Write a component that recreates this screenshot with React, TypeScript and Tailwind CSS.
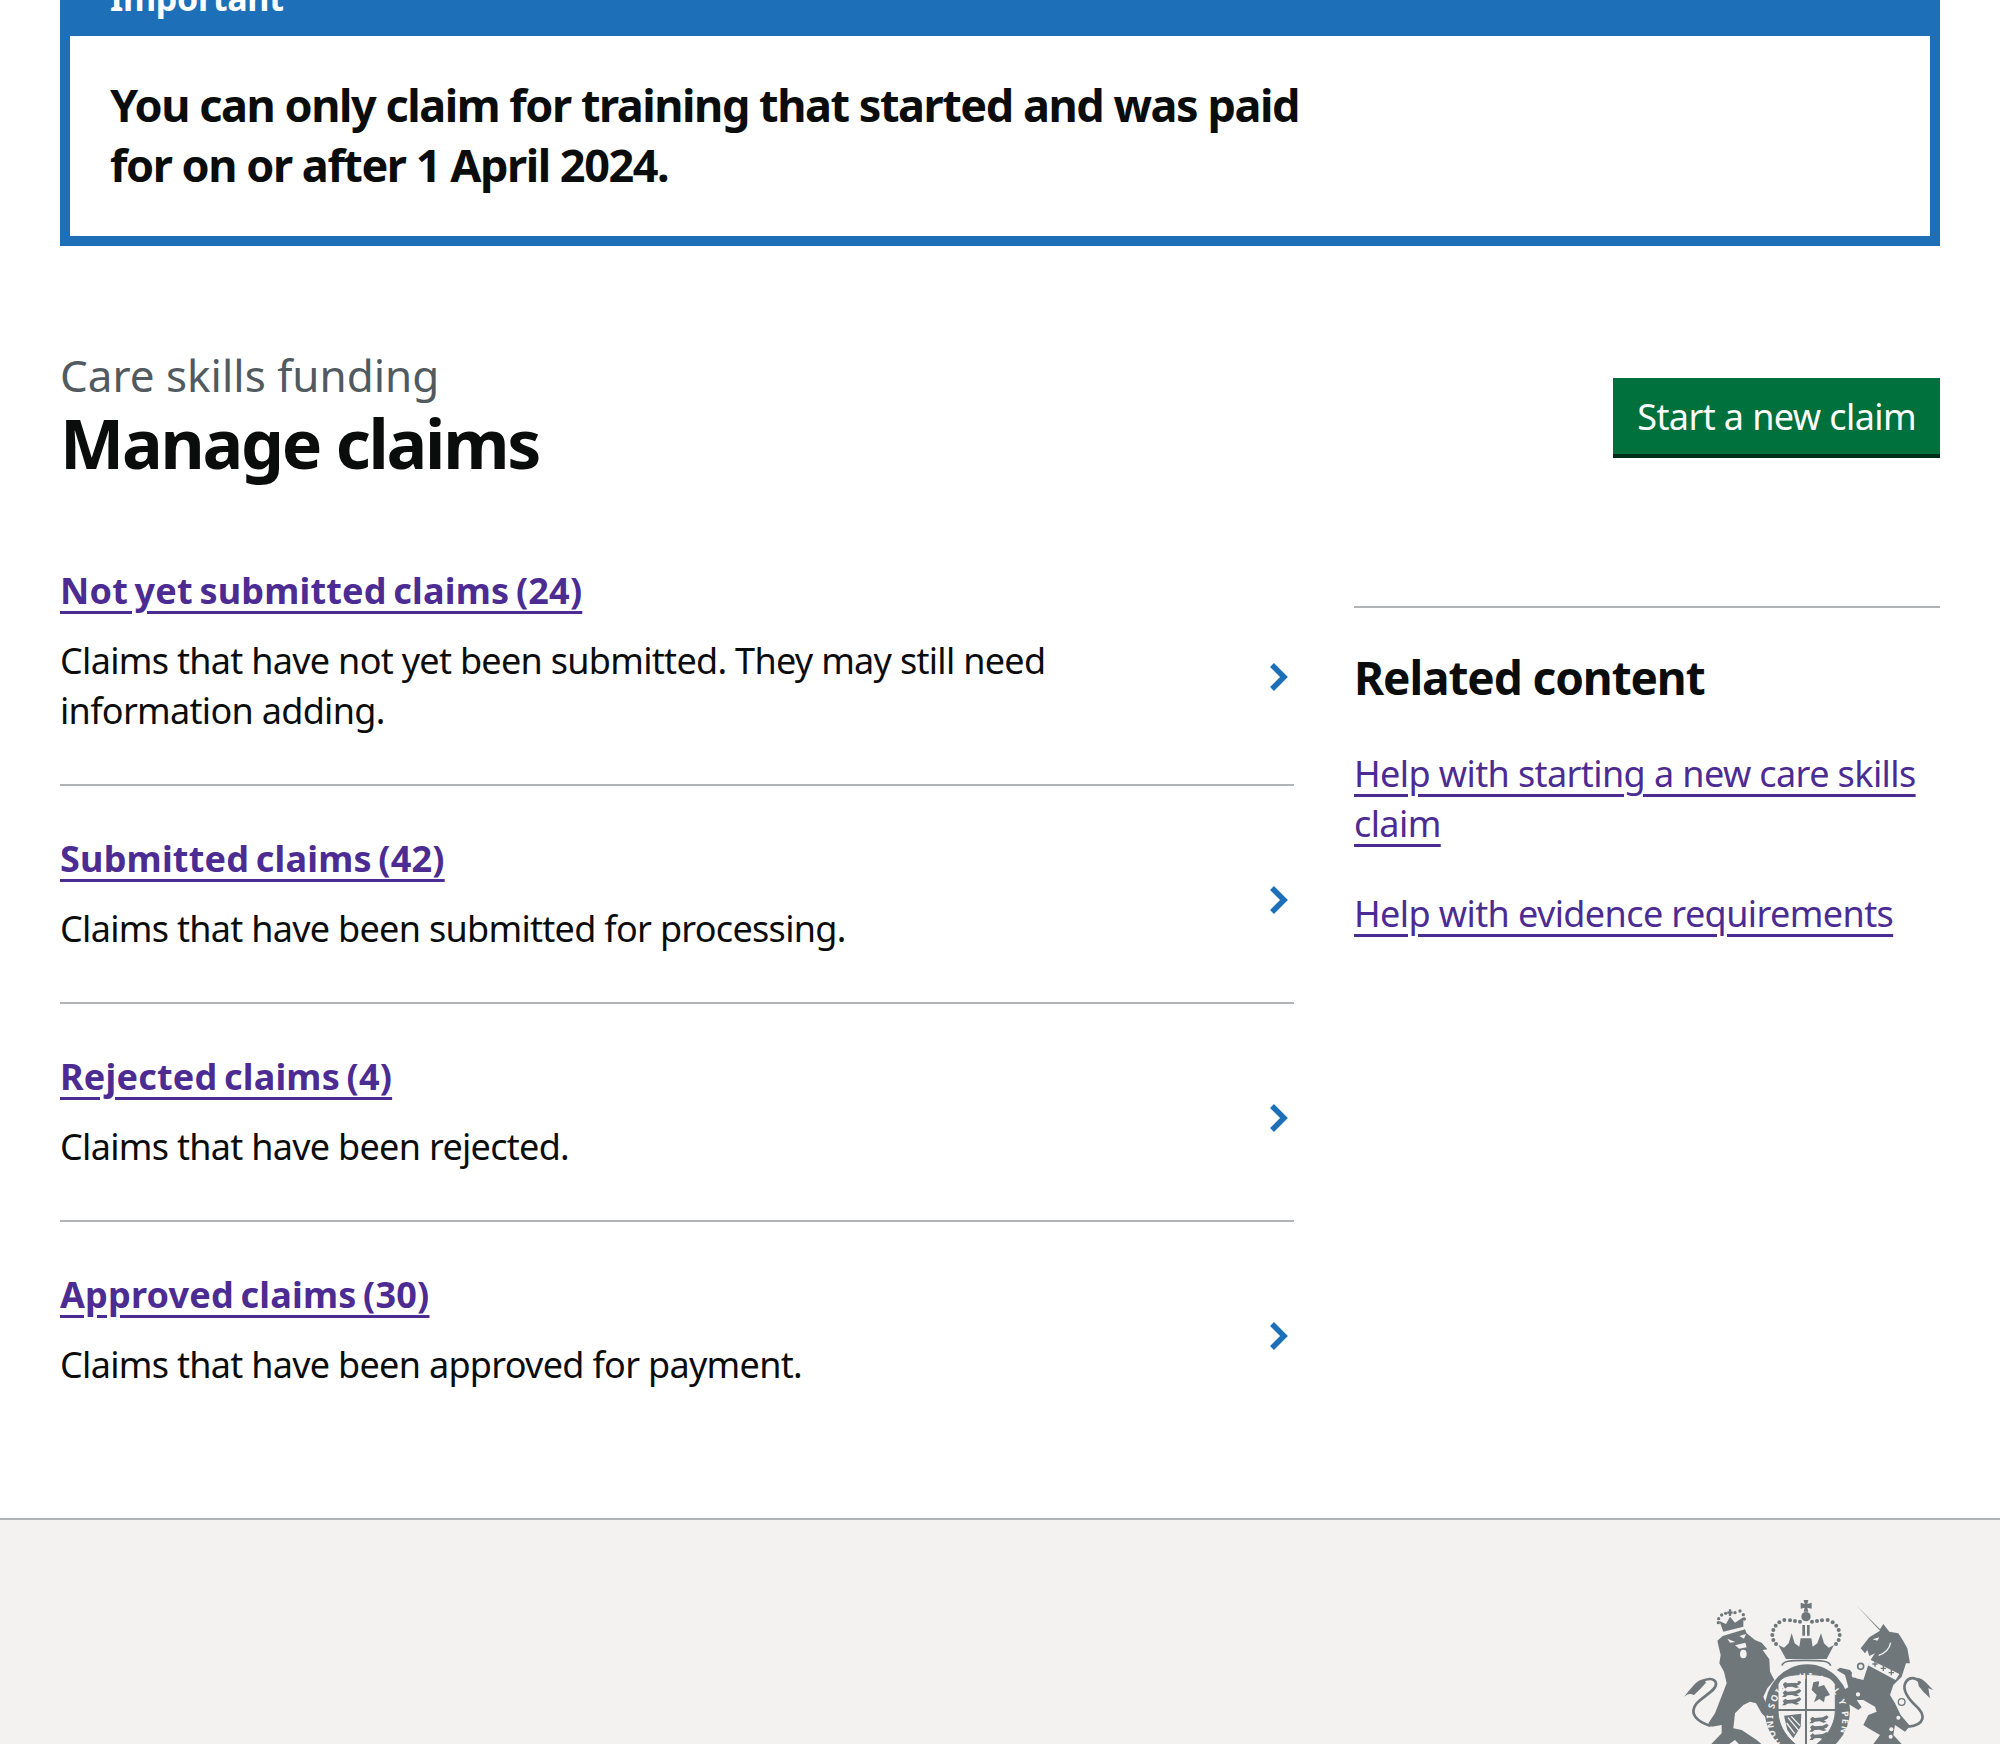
const rows = [
  {
    title: "Not yet submitted claims (24)",
    text: "Claims that have not yet been submitted. They may still need information adding.",
    shift: "translate-y-[26px]",
  },
  { title: "Submitted claims (42)", text: "Claims that have been submitted for processing.", shift: "translate-y-[6px]" },
  { title: "Rejected claims (4)", text: "Claims that have been rejected.", shift: "translate-y-[6px]" },
  { title: "Approved claims (30)", text: "Claims that have been approved for payment.", shift: "translate-y-[6px]" },
];

function Chevron({ className }: { className: string }) {
  return (
    <svg width="20" height="30" viewBox="0 0 20 30" className={`mr-[5px] shrink-0 ${className}`}>
      <path d="M3 3 L15 15 L3 27" fill="none" stroke="#1d70b8" strokeWidth="5.5" />
    </svg>
  );
}

function Dots({ points, r, fill }: { points: number[][]; r: number; fill: string }) {
  return (
    <>
      {points.map(([x, y]) => (
        <circle key={`${x}-${y}`} cx={x} cy={y} r={r} fill={fill} />
      ))}
    </>
  );
}

function CoatOfArms() {
  const c = "#6f777b";
  const bg = "#f3f2f1";
  const crownLeft = [
    [120, 80], [105, 78], [90, 76], [73, 75], [58, 82], [47, 92], [40, 105], [37, 120], [40, 135], [48, 147],
  ];
  const crownRight = crownLeft.map(([x, y]) => [276 - x, y]);
  const passant = (x: number, y: number) =>
    `M${x} ${y} l8 -7 l6 4 l24 -2 l12 -6 l6 5 l-6 7 l-8 3 l8 5 l-10 2 l-12 -4 l-14 1 l-6 5 l-10 0 l6 -7 z`;
  return (
    <svg width="257" height="147" viewBox="0 0 771 441" className="block">
      {/* lion */}
      <g transform="translate(0 9)">
        <path d="M112 122 L128 108 L195 88 L200 100 L225 120 L245 128 L262 148 L248 150 L268 178 L270 215 L283 240 L262 265 L250 290 L262 320 L282 350 L265 360 L245 340 L228 310 L210 305 L190 315 L165 340 L160 385 L185 390 L230 420 L255 441 L185 441 L165 420 L135 441 L85 441 L125 400 L125 375 L95 380 L85 370 L105 340 L140 250 L132 215 L118 190 L122 165 L116 140 Z" fill={c} />
        <path d="M92 378 C50 365 25 340 50 310 C75 285 110 270 108 250 C104 232 80 235 65 245" fill="none" stroke={c} strokeWidth="8" />
        <path d="M72 238 C50 238 35 265 12 290 C28 278 32 282 42 285 L60 268 L78 248 Z" fill={c} />
        <path d="M142 116 L166 126 L150 128 Z M178 108 L198 102 L192 116 Z" fill={bg} />
        <path d="M165 136 L196 128 L200 142 L178 146 Z" fill={bg} />
        <ellipse cx="190" cy="162" rx="10" ry="13" fill={bg} />
        <path d="M130 95 L118 63 L138 72 L150 50 L165 68 L190 52 L190 80 Z" fill={c} />
        <path d="M142 38 H158 M150 28 V48" stroke={c} strokeWidth="7" />
        <Dots points={[[115, 68], [116, 56], [125, 45], [137, 40], [165, 38], [180, 33], [190, 44], [193, 57]]} r={5} fill={c} />
      </g>

      {/* crown, garter and shield */}
      <g transform="translate(240 -6)">
        <path d="M131 15 L145 15 L142 27 L155 23 L155 41 L142 38 L145 50 L131 50 L134 38 L122 41 L122 23 L134 27 Z" fill={c} />
        <circle cx="138" cy="65" r="14" fill={c} />
        <path d="M127 90 H135 V122 H127 Z M141 90 H149 V122 H141 Z" fill={c} />
        <Dots points={crownLeft} r={6} fill={c} />
        <Dots points={crownRight} r={6} fill={c} />
        <path d="M55 150 L72 158 L86 145 L95 115 L104 145 L118 155 L122 130 L154 130 L158 155 L172 145 L183 115 L192 145 L206 158 L222 150 L200 192 L78 192 Z" fill={c} />
        <path d="M66 212 C68 198 90 196 138 196 C186 196 208 198 212 212" fill="none" stroke={c} strokeWidth="5" />
        <ellipse cx="142" cy="345" rx="128" ry="137" fill={c} />
        <path d="M54 268 C64 245 80 240 138 238 C200 240 214 248 226 268 V345 C226 400 188 440 138 470 C88 440 54 400 54 345 Z" fill={bg} stroke={c} strokeWidth="3" />
        <path d="M135 238 H141 V470 H135 Z M54 342 H226 V348 H54 Z" fill={c} />
        {[268, 293, 318].map((y) => (
          <path key={y} d={passant(68, y)} fill={c} />
        ))}
        {[372, 397, 422].map((y) => (
          <path key={y} d={passant(150, y)} fill={c} />
        ))}
        <path d="M160 262 L178 258 L175 275 L192 270 L210 300 L195 305 L192 322 L178 312 L162 322 L170 300 L155 285 Z" fill={c} />
        <path d="M72 362 L124 356 L122 395 L100 430 L82 405 Z" fill={c} />
        <path d="M84 368 L116 406 M94 364 L120 392 M80 384 L104 416" stroke={bg} strokeWidth="4" />
        <path id="garterPath" d="M62 446 A104 118 0 1 1 236 424" fill="none" />
        <text fontSize="27" fontWeight="700" fill={bg} fontFamily="'Noto Sans', sans-serif">
          <textPath href="#garterPath" textLength="510">HONI SOIT QUI MAL Y PENSE</textPath>
        </text>
      </g>

      {/* unicorn */}
      <g transform="translate(450 9)">
        <path d="M78 15 L150 88 L160 72 L178 95 L205 100 L218 120 L232 145 L240 190 L228 190 L215 230 L190 255 L180 285 L195 310 L212 345 L240 378 L225 395 L195 375 L190 405 L215 432 L130 432 L150 405 L115 385 L100 375 L115 345 L140 335 L135 320 L100 300 L80 300 L95 322 L85 330 L45 305 L40 270 L55 262 L45 225 L20 210 L30 203 L60 210 L78 235 L100 240 L118 185 L135 160 L118 168 L112 150 L105 160 L92 145 L118 112 L150 92 Z" fill={c} />
        <path d="M235 380 C285 375 290 345 255 315 C230 290 215 265 228 245 C240 228 265 232 275 255" fill="none" stroke={c} strokeWidth="8" />
        <path d="M262 233 C280 235 290 250 310 270 L295 265 L300 295 L280 275 L266 258 Z" fill={c} />
        <path d="M128 118 L148 112 L142 122 Z" fill={bg} />
        <path d="M182 128 C178 148 165 160 146 166" fill="none" stroke={bg} strokeWidth="4" />
        <path d="M118 178 L208 222 L197 240 L114 196 Z" fill={bg} />
        <path d="M135 183 V200 M127 192 H143 M160 196 V213 M152 205 H168 M184 209 V226 M176 218 H192" stroke={c} strokeWidth="4" />
        <circle cx="92" cy="199" r="9" fill={bg} stroke={c} strokeWidth="5" />
        <circle cx="73" cy="225" r="8" fill={bg} />
        <circle cx="84" cy="283" r="9" fill={bg} stroke={c} strokeWidth="5" />
        <circle cx="215" cy="306" r="10" fill={bg} stroke={c} strokeWidth="4" />
        <Dots points={[[205, 353], [184, 388], [182, 410]]} r={6} fill={bg} />
      </g>
    </svg>
  );
}

export default function App() {
  return (
    <div className="h-[1744px] overflow-hidden bg-white font-['Noto_Sans',sans-serif] text-[#0b0c0c]">
      <main className="px-[60px]">
        {/* Notification banner, scrolled partly out of view */}
        <section className="-mt-[37px] border-[10px] border-[#1d70b8]">
          <div className="bg-[#1d70b8] pb-[13px] pl-[40px] text-[34px] font-bold leading-[50px] tracking-[-0.3px] text-white">
            Important
          </div>
          <div className="px-[40px] pb-[41px] pt-[39px]">
            <p className="w-[1200px] text-[45px] font-bold leading-[60px] tracking-[-1.45px]">
              You can only claim for training that started and was paid for on or after 1 April 2024.
            </p>
          </div>
        </section>

        <header className="mt-[104px] flex items-center justify-between">
          <div>
            <p className="mb-[3px] text-[44px] leading-[50px] text-[#505a5f]">Care skills funding</p>
            <h1 className="text-[68px] font-bold leading-[80px] tracking-[-2.2px]">Manage claims</h1>
          </div>
          <button className="mb-[2px] bg-[#00703c] px-[24px] pb-[12px] pt-[14px] text-[36px] leading-[50px] tracking-[-0.6px] text-white shadow-[0_4px_0_#002d18]">
            Start a new claim
          </button>
        </header>

        <div className="mt-[35px] flex justify-between">
          <ul className="w-[1234px]">
            {rows.map((row, i) => (
              <li
                key={row.title}
                className={`flex items-center justify-between py-[48px] ${i < rows.length - 1 ? "border-b-2 border-[#b1b4b6]" : ""}`}
              >
                <div className="w-[1000px]">
                  <a className="text-[36px] font-bold leading-[50px] tracking-[0.2px] text-[#4c2c92] underline underline-offset-[7px] [word-spacing:-3px]">
                    {row.title}
                  </a>
                  <p className="mt-[20px] text-[36px] leading-[50px] tracking-[-0.7px]">{row.text}</p>
                </div>
                <Chevron className={row.shift} />
              </li>
            ))}
          </ul>
          <aside className="mt-[88px] w-[586px] border-t-2 border-[#b1b4b6] pt-[39px]">
            <h2 className="text-[46px] font-bold leading-[60px] tracking-[-1.1px]">Related content</h2>
            <ul className="mt-[42px] flex flex-col gap-[40px] text-[36px] leading-[50px] tracking-[-0.6px] text-[#4c2c92] underline underline-offset-[7px]">
              <li><a>Help with starting a new care skills claim</a></li>
              <li><a>Help with evidence requirements</a></li>
            </ul>
          </aside>
        </div>
      </main>

      <footer className="mt-[80px] flex h-[400px] justify-end border-t-2 border-[#b1b4b6] bg-[#f3f2f1] pr-[63px] pt-[77px]">
        <CoatOfArms />
      </footer>
    </div>
  );
}
